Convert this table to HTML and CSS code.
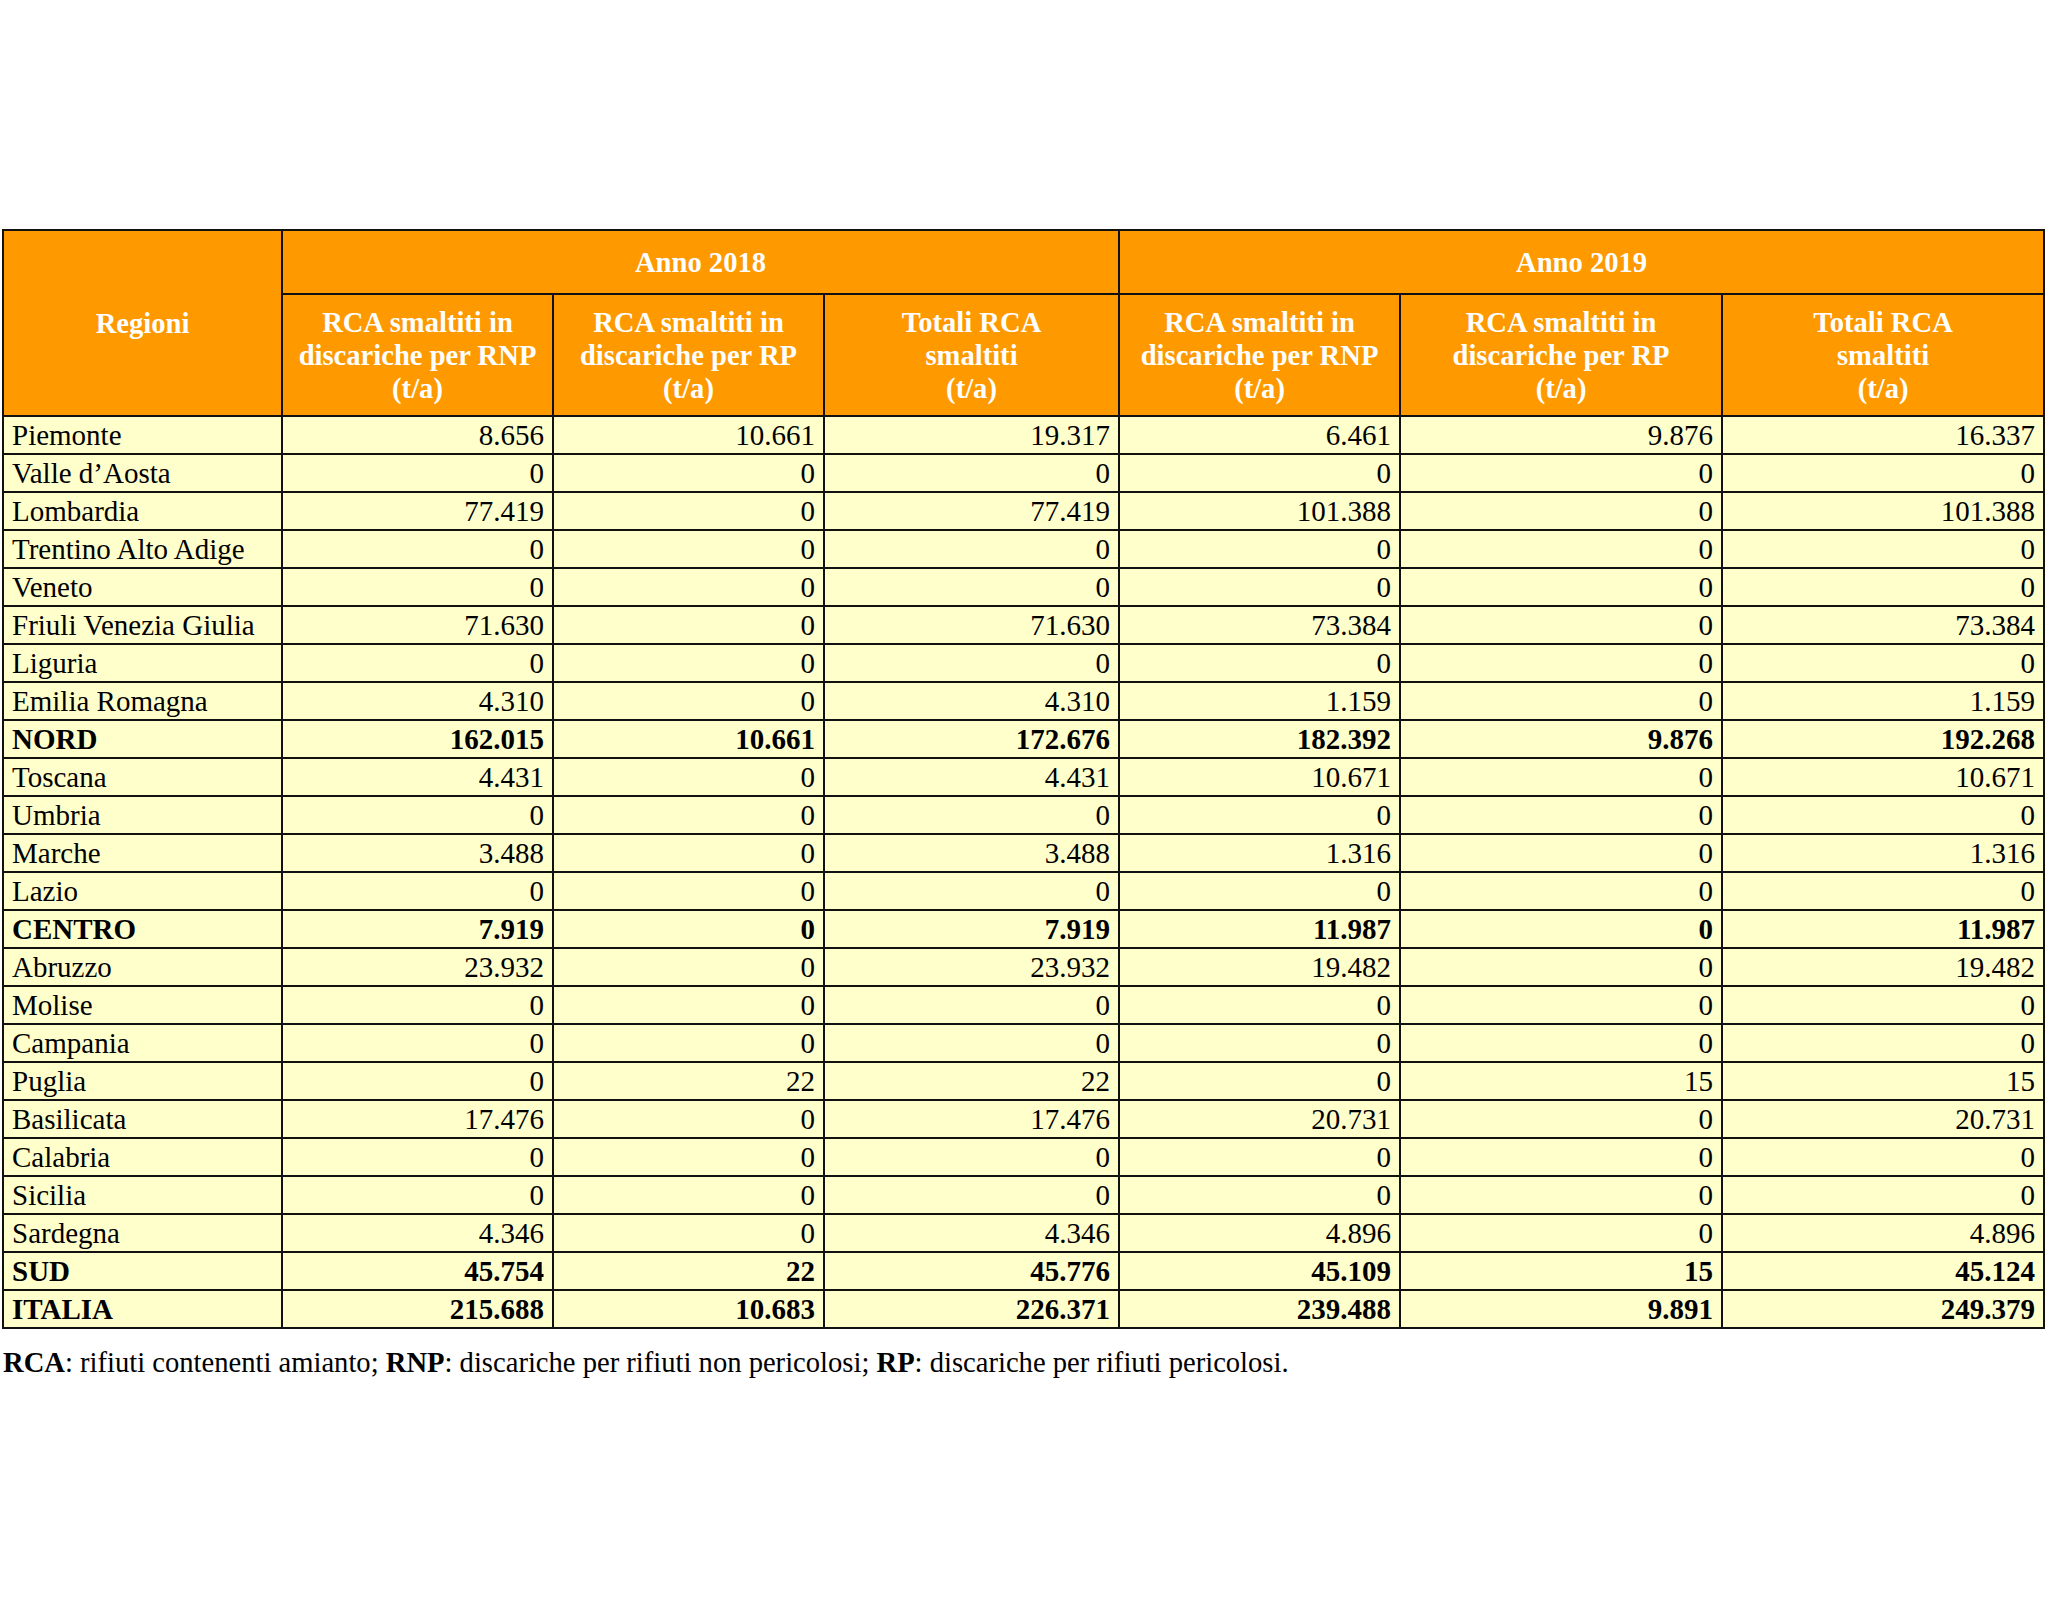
FILE: index.html
```html
<!DOCTYPE html>
<html lang="it">
<head>
<meta charset="utf-8">
<title>RCA smaltiti in discarica</title>
<link rel="stylesheet" href="styles.css">
</head>
<body>
<div class="page">
<table class="data">
<colgroup>
<col class="c-reg"><col class="c-a"><col class="c-b"><col class="c-c"><col class="c-d"><col class="c-e"><col class="c-f">
</colgroup>
<thead>
<tr class="h1">
<th rowspan="2">Regioni</th>
<th colspan="3">Anno 2018</th>
<th colspan="3">Anno 2019</th>
</tr>
<tr class="h2">
<th>RCA smaltiti in<br>discariche per RNP<br>(t/a)</th>
<th>RCA smaltiti in<br>discariche per RP<br>(t/a)</th>
<th>Totali RCA<br>smaltiti<br>(t/a)</th>
<th>RCA smaltiti in<br>discariche per RNP<br>(t/a)</th>
<th>RCA smaltiti in<br>discariche per RP<br>(t/a)</th>
<th>Totali RCA<br>smaltiti<br>(t/a)</th>
</tr>
</thead>
<tbody>
<tr><td>Piemonte</td><td>8.656</td><td>10.661</td><td>19.317</td><td>6.461</td><td>9.876</td><td>16.337</td></tr>
<tr><td>Valle d’Aosta</td><td>0</td><td>0</td><td>0</td><td>0</td><td>0</td><td>0</td></tr>
<tr><td>Lombardia</td><td>77.419</td><td>0</td><td>77.419</td><td>101.388</td><td>0</td><td>101.388</td></tr>
<tr><td>Trentino Alto Adige</td><td>0</td><td>0</td><td>0</td><td>0</td><td>0</td><td>0</td></tr>
<tr><td>Veneto</td><td>0</td><td>0</td><td>0</td><td>0</td><td>0</td><td>0</td></tr>
<tr><td>Friuli Venezia Giulia</td><td>71.630</td><td>0</td><td>71.630</td><td>73.384</td><td>0</td><td>73.384</td></tr>
<tr><td>Liguria</td><td>0</td><td>0</td><td>0</td><td>0</td><td>0</td><td>0</td></tr>
<tr><td>Emilia Romagna</td><td>4.310</td><td>0</td><td>4.310</td><td>1.159</td><td>0</td><td>1.159</td></tr>
<tr class="tot"><td>NORD</td><td>162.015</td><td>10.661</td><td>172.676</td><td>182.392</td><td>9.876</td><td>192.268</td></tr>
<tr><td>Toscana</td><td>4.431</td><td>0</td><td>4.431</td><td>10.671</td><td>0</td><td>10.671</td></tr>
<tr><td>Umbria</td><td>0</td><td>0</td><td>0</td><td>0</td><td>0</td><td>0</td></tr>
<tr><td>Marche</td><td>3.488</td><td>0</td><td>3.488</td><td>1.316</td><td>0</td><td>1.316</td></tr>
<tr><td>Lazio</td><td>0</td><td>0</td><td>0</td><td>0</td><td>0</td><td>0</td></tr>
<tr class="tot"><td>CENTRO</td><td>7.919</td><td>0</td><td>7.919</td><td>11.987</td><td>0</td><td>11.987</td></tr>
<tr><td>Abruzzo</td><td>23.932</td><td>0</td><td>23.932</td><td>19.482</td><td>0</td><td>19.482</td></tr>
<tr><td>Molise</td><td>0</td><td>0</td><td>0</td><td>0</td><td>0</td><td>0</td></tr>
<tr><td>Campania</td><td>0</td><td>0</td><td>0</td><td>0</td><td>0</td><td>0</td></tr>
<tr><td>Puglia</td><td>0</td><td>22</td><td>22</td><td>0</td><td>15</td><td>15</td></tr>
<tr><td>Basilicata</td><td>17.476</td><td>0</td><td>17.476</td><td>20.731</td><td>0</td><td>20.731</td></tr>
<tr><td>Calabria</td><td>0</td><td>0</td><td>0</td><td>0</td><td>0</td><td>0</td></tr>
<tr><td>Sicilia</td><td>0</td><td>0</td><td>0</td><td>0</td><td>0</td><td>0</td></tr>
<tr><td>Sardegna</td><td>4.346</td><td>0</td><td>4.346</td><td>4.896</td><td>0</td><td>4.896</td></tr>
<tr class="tot"><td>SUD</td><td>45.754</td><td>22</td><td>45.776</td><td>45.109</td><td>15</td><td>45.124</td></tr>
<tr class="tot"><td>ITALIA</td><td>215.688</td><td>10.683</td><td>226.371</td><td>239.488</td><td>9.891</td><td>249.379</td></tr>
</tbody>
</table>
<p class="note"><b>RCA</b>: rifiuti contenenti amianto; <b>RNP</b>: discariche per rifiuti non pericolosi; <b>RP</b>: discariche per rifiuti pericolosi.</p>
</div>
</body>
</html>
```

FILE: styles.css
```css
html, body {
  margin: 0;
  padding: 0;
  background: #fff;
}
.page {
  padding: 229px 0 0 2px;
  font-family: "Liberation Serif", "Times New Roman", serif;
  color: #000;
}
.data {
  border-collapse: collapse;
  table-layout: fixed;
  width: 2043px;
  font-size: 29px;
}
.c-reg { width: 279px; }
.c-a { width: 271px; }
.c-b { width: 271px; }
.c-c { width: 295px; }
.c-d { width: 281px; }
.c-e { width: 322px; }
.c-f { width: 322px; }
.data th, .data td {
  border: 2px solid #111;
  padding: 0 8px;
  overflow: hidden;
  white-space: nowrap;
}
.data th {
  background: #ff9900;
  color: #fff;
  font-size: 28.6px;
  font-weight: bold;
  text-align: center;
  vertical-align: middle;
  line-height: 33px;
}
.h1 th { height: 62px; }
.h2 th { height: 120px; }
.data td {
  background: #ffffcc;
  height: 36px;
  line-height: 36px;
  text-align: right;
  vertical-align: middle;
}
.data td:first-child { text-align: left; }
.tot td { font-weight: bold; }
.note {
  margin: 16px 0 0 1px;
  font-size: 28.6px;
  line-height: 36px;
}
```
